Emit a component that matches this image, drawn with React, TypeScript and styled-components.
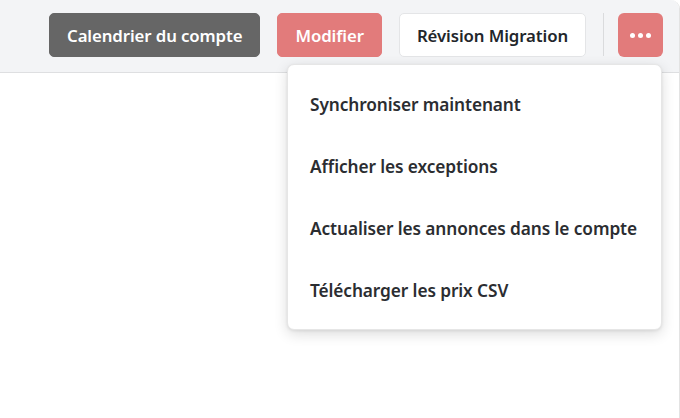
import React from "react";
import styled, { createGlobalStyle } from "styled-components";

const Global = createGlobalStyle`
  html, body { margin: 0; padding: 0; background: #ffffff; }
  body { font-family: "Noto Sans", "Open Sans", Arial, sans-serif; }
  * { box-sizing: border-box; }
`;

const Page = styled.div`
  position: relative;
  width: 680px;
  height: 418px;
  background: #ffffff;
  border-right: 1px solid #e3e3e3;
  border-top-right-radius: 9px;
  overflow: hidden;
`;

const Toolbar = styled.div`
  height: 73px;
  background: #f3f4f6;
  border-bottom: 1px solid #dedfe1;
  display: flex;
  align-items: flex-start;
  justify-content: flex-end;
  padding: 13px 16px 0 0;
`;

const Button = styled.button<{ $variant: "dark" | "danger" | "light" }>`
  height: 44px;
  padding: 0 17px;
  border-radius: 5px;
  font-family: "Noto Sans", "Open Sans", Arial, sans-serif;
  font-weight: 600;
  font-size: 16.8px;
  letter-spacing: -0.1px;
  display: flex;
  align-items: center;
  justify-content: center;
  cursor: pointer;
  margin-right: 17px;
  background: ${(p) =>
    p.$variant === "dark" ? "#666666" : p.$variant === "danger" ? "#e27b7b" : "#ffffff"};
  color: ${(p) => (p.$variant === "light" ? "#22262b" : "#ffffff")};
  border: 1px solid
    ${(p) =>
      p.$variant === "dark" ? "#666666" : p.$variant === "danger" ? "#e27b7b" : "#e4e5e7"};
`;

const Divider = styled.div`
  width: 1px;
  height: 43px;
  background: #dadbdd;
  margin-right: 14px;
`;

const MoreButton = styled.button`
  width: 45px;
  height: 44px;
  border-radius: 6px;
  background: #e27b7b;
  border: none;
  display: flex;
  align-items: center;
  justify-content: center;
  gap: 3px;
  padding: 0;
  cursor: pointer;
`;

const Dot = styled.span`
  width: 5px;
  height: 5px;
  border-radius: 50%;
  background: #ffffff;
`;

const Menu = styled.div`
  position: absolute;
  top: 64px;
  right: 17px;
  width: 375px;
  background: #ffffff;
  border: 1px solid #e6e6e6;
  border-radius: 7px;
  box-shadow: 0 4px 14px rgba(0, 0, 0, 0.14), 0 1px 3px rgba(0, 0, 0, 0.08);
  padding: 8px 0;
  display: flex;
  flex-direction: column;
`;

const MenuItem = styled.div`
  height: 62px;
  display: flex;
  align-items: center;
  padding: 0 22px;
  font-family: "Noto Sans", "Open Sans", Arial, sans-serif;
  font-weight: 600;
  font-size: 17.3px;
  letter-spacing: -0.1px;
  color: #2b2d31;
  cursor: pointer;
`;

const items = [
  "Synchroniser maintenant",
  "Afficher les exceptions",
  "Actualiser les annonces dans le compte",
  "Télécharger les prix CSV",
];

export default function App() {
  return (
    <>
      <Global />
      <Page>
        <Toolbar>
          <Button $variant="dark">Calendrier du compte</Button>
          <Button $variant="danger">Modifier</Button>
          <Button $variant="light">Révision Migration</Button>
          <Divider />
          <MoreButton aria-label="Plus">
            <Dot />
            <Dot />
            <Dot />
          </MoreButton>
        </Toolbar>
        <Menu>
          {items.map((t) => (
            <MenuItem key={t}>{t}</MenuItem>
          ))}
        </Menu>
      </Page>
    </>
  );
}
